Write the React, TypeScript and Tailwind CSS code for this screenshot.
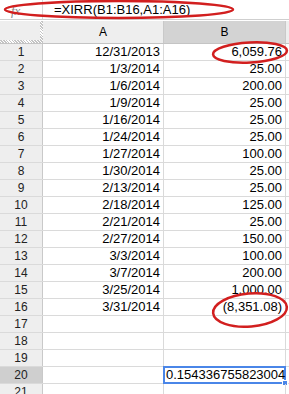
const rows: [string, string][] = [
  ['12/31/2013', '6,059.76'],
  ['1/3/2014', '25.00'],
  ['1/6/2014', '200.00'],
  ['1/9/2014', '25.00'],
  ['1/16/2014', '25.00'],
  ['1/24/2014', '25.00'],
  ['1/27/2014', '100.00'],
  ['1/30/2014', '25.00'],
  ['2/13/2014', '25.00'],
  ['2/18/2014', '125.00'],
  ['2/21/2014', '25.00'],
  ['2/27/2014', '150.00'],
  ['3/3/2014', '100.00'],
  ['3/7/2014', '200.00'],
  ['3/25/2014', '1,000.00'],
  ['3/31/2014', '(8,351.08)'],
  ['', ''],
  ['', ''],
  ['', ''],
  ['', ''],
  ['', ''],
];

const hatch = "bg-[repeating-linear-gradient(45deg,#c4c4c4_0px,#c4c4c4_1px,#ffffff_1px,#ffffff_2px)]";

export default function App() {
  return (
    <div className="relative w-[289px] h-[394px] overflow-hidden bg-white text-[13px] text-black font-['Liberation_Sans',Arial,sans-serif]">
      {/* formula bar */}
      <div className="flex h-[20px] border-b border-[#cfcfcf]">
        <div className="w-[43px] border-r border-[#d6d6d6] flex items-end pb-[2px] pl-[11px] text-[#8a8a8a] italic text-[13px] leading-none font-['Liberation_Serif',serif]">
          fx
        </div>
        <div className="flex items-center pl-[11px] leading-none">=XIRR(B1:B16,A1:A16)</div>
      </div>
      <div className="h-[1px]" />

      {/* column headers */}
      <div className="flex h-[23px] border-b border-[#c4c4c4] bg-[#eeeeee] text-[12px]">
        <div className="w-[43px] flex">
          <div className="flex-1 flex flex-col">
            <div className="flex-1" />
            <div className={`h-[3px] ${hatch}`} />
          </div>
          <div className={`w-[3px] ${hatch}`} />
        </div>
        <div className="w-[121px] border-r border-[#c9c9c9] flex items-center justify-center">A</div>
        <div className="w-[122px] border-r border-[#c9c9c9] bg-[#d3d3d3] flex items-center justify-center">B</div>
        <div className="flex-1" />
      </div>

      {/* rows */}
      {rows.map(([a, b], i) => {
        const n = i + 1;
        const sel = n === 20;
        return (
          <div key={n} className="flex h-[17px] border-b border-[#dadada]">
            <div
              className={clsx(
                'w-[43px] border-r border-[#c9c9c9] flex items-center justify-center text-[12px] text-[#222]',
                sel ? 'bg-[#cfcfcf]' : 'bg-[#eeeeee]'
              )}
            >
              {n}
            </div>
            <div className="w-[121px] border-r border-[#dadada] flex items-center justify-end pr-[3px]">{a}</div>
            <div className="w-[122px] border-r border-[#dadada] flex items-center justify-end pr-[3px] relative">
              {sel ? (
                <div className="absolute left-[-1px] top-[-1px] w-[123px] h-[18px] border-2 border-[#4a86e8] flex items-center pl-[1px] whitespace-nowrap">
                  0.154336755823004
                  <div className="absolute right-[-4px] bottom-[-4px] w-[6px] h-[6px] bg-[#4a86e8] border border-white" />
                </div>
              ) : (
                b
              )}
            </div>
            <div className="flex-1" />
          </div>
        );
      })}

      {/* red annotations */}
      <svg className="absolute inset-0 pointer-events-none" width="289" height="394" viewBox="0 0 289 394">
        <ellipse cx="119" cy="9.5" rx="114" ry="8.5" fill="none" stroke="#d21f1f" strokeWidth="2.5" />
        <ellipse cx="250" cy="52.5" rx="37" ry="10" fill="none" stroke="#d21f1f" strokeWidth="2.5" transform="rotate(-3 250 52.5)" />
        <ellipse cx="250" cy="310" rx="37" ry="16.5" fill="none" stroke="#d21f1f" strokeWidth="2.5" transform="rotate(-5 250 310)" />
      </svg>
    </div>
  );
}

function clsx(...c: (string | false | undefined)[]) {
  return c.filter(Boolean).join(' ');
}
